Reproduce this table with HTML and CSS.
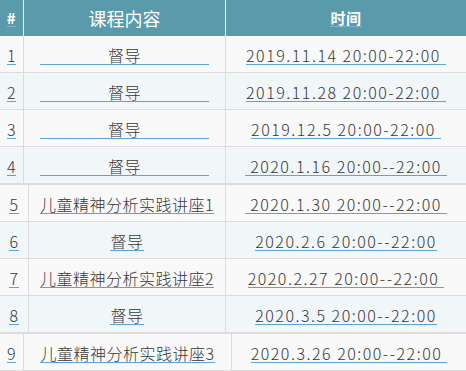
FILE: index.html
```html
<!DOCTYPE html>
<html lang="zh">
<head>
<meta charset="utf-8">
<title>课程</title>
<link rel="stylesheet" href="styles.css">
</head>
<body>
<div class="page">
  <div class="tbl t1">
    <div class="row head">
      <div class="cell"><a class="lnk hlnk">#</a></div>
      <div class="cell big">课程内容</div>
      <div class="cell"><a class="lnk hlnk">时间</a></div>
    </div>
    <div class="row odd">
      <div class="cell"><a class="lnk">1</a></div>
      <div class="cell"><a class="lnk wide">督导</a></div>
      <div class="cell"><a class="lnk date">2019.11.14 20:00-22:00&nbsp;</a></div>
    </div>
    <div class="row even">
      <div class="cell"><a class="lnk">2</a></div>
      <div class="cell"><a class="lnk wide">督导</a></div>
      <div class="cell"><a class="lnk date">2019.11.28 20:00-22:00&nbsp;</a></div>
    </div>
    <div class="row odd">
      <div class="cell"><a class="lnk">3</a></div>
      <div class="cell"><a class="lnk wide">督导</a></div>
      <div class="cell"><a class="lnk date">2019.12.5 20:00-22:00&nbsp;</a></div>
    </div>
    <div class="row even">
      <div class="cell"><a class="lnk">4</a></div>
      <div class="cell"><a class="lnk wide">督导</a></div>
      <div class="cell"><a class="lnk date">&nbsp;2020.1.16 20:00--22:00&nbsp;</a></div>
    </div>
  </div>
  <div class="tbl t2">
    <div class="row odd">
      <div class="cell"><a class="lnk">5</a></div>
      <div class="cell"><a class="lnk">儿童精神分析实践讲座1</a></div>
      <div class="cell"><a class="lnk date">&nbsp;2020.1.30 20:00--22:00&nbsp;</a></div>
    </div>
    <div class="row even">
      <div class="cell"><a class="lnk">6</a></div>
      <div class="cell"><a class="lnk">督导</a></div>
      <div class="cell"><a class="lnk date">2020.2.6 20:00--22:00</a></div>
    </div>
    <div class="row odd">
      <div class="cell"><a class="lnk">7</a></div>
      <div class="cell"><a class="lnk">儿童精神分析实践讲座2</a></div>
      <div class="cell"><a class="lnk date">2020.2.27 20:00--22:00&nbsp;</a></div>
    </div>
    <div class="row even">
      <div class="cell"><a class="lnk">8</a></div>
      <div class="cell"><a class="lnk">督导</a></div>
      <div class="cell"><a class="lnk date">2020.3.5 20:00--22:00</a></div>
    </div>
  </div>
  <div class="tbl t3">
    <div class="row odd">
      <div class="cell"><a class="lnk">9</a></div>
      <div class="cell"><a class="lnk">儿童精神分析实践讲座3</a></div>
      <div class="cell"><a class="lnk date">2020.3.26 20:00--22:00&nbsp;</a></div>
    </div>
  </div>
</div>
</body>
</html>
```
FILE: styles.css
```css
html, body {
  margin: 0;
  padding: 0;
  background: #ffffff;
}
body {
  font-family: "Noto Sans CJK SC", "Noto Sans", sans-serif;
  font-size: 16px;
  font-weight: 300;
  color: #383838;
  letter-spacing: 0.5px;
}
.page {
  width: 466px;
}
.tbl {
  display: flex;
  flex-direction: column;
  border-top: 1px solid #dcdcdc;
}
.t1 {
  border-top: none;
}
.row {
  display: grid;
  height: 37px;
  box-sizing: border-box;
  border-bottom: 1px solid #dcdcdc;
}
.t1 .row { grid-template-columns: 24px 202px 1fr; }
.t2 .row { grid-template-columns: 29px 197px 1fr; }
.t3 .row { grid-template-columns: 24px 208px 1fr; }
.row.head {
  height: 36px;
  border-bottom: none;
  background: #5a9bab;
  color: #ffffff;
}
.odd { background: #f9f9f9; }
.even { background: #f1f6f9; }
.cell {
  display: flex;
  align-items: center;
  justify-content: center;
  border-right: 1px solid #dcdcdc;
  padding-top: 2px;
  box-sizing: border-box;
  white-space: nowrap;
  overflow: hidden;
}
.cell:last-child {
  border-right: none;
}
.head .cell {
  border-right-color: #e4eef1;
  padding-top: 0;
}
.lnk {
  display: inline-block;
  line-height: 18px;
  border-bottom: 1px solid #5ba4d4;
  color: inherit;
  text-decoration: none;
}
.lnk.wide {
  padding: 0 68px 0 68px;
}
.hlnk {
  font-size: 15px;
  font-weight: bold;
  line-height: 16px;
  border-bottom-color: #7fb4cc;
}
.big {
  font-size: 18px;
  font-weight: 400;
  letter-spacing: 0;
}
.date {
  letter-spacing: 1.5px;
}
```
